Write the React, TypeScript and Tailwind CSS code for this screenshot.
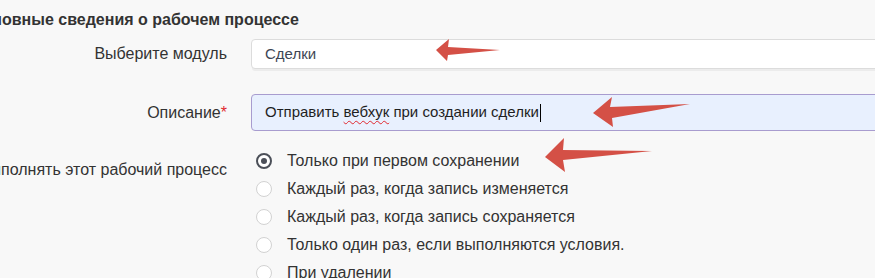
import React from "react";

const options = [
  "Только при первом сохранении",
  "Каждый раз, когда запись изменяется",
  "Каждый раз, когда запись сохраняется",
  "Только один раз, если выполняются условия.",
  "При удалении",
];

const Radio = ({ checked, label }: { checked?: boolean; label: string }) => (
  <label className="flex h-[28px] items-center">
    {checked ? (
      <span className="flex h-[16px] w-[16px] items-center justify-center rounded-full border-2 border-[#4b4f58] bg-white">
        <span className="h-[6px] w-[6px] rounded-full bg-[#4b4f58]" />
      </span>
    ) : (
      <span className="h-[16px] w-[16px] rounded-full border-[1.5px] border-[#d2d2d2] bg-white" />
    )}
    <span className="ml-[15px] whitespace-nowrap">{label}</span>
  </label>
);

// red arrows drawn over the form
const Arrows = () => (
  <svg
    className="pointer-events-none absolute left-0 top-0"
    width="875"
    height="278"
    viewBox="0 0 875 278"
  >
    <g fill="#d45046">
      <polygon points="436,50 449,39 448,47 500,50 448,55 447,61" />
      <polygon points="593,113 612,97 610,107 690,104 612,118 613,127" />
      <polygon points="545,157 564,138 563,150 652,151 563,160 565,172" />
    </g>
  </svg>
);

export default function App() {
  return (
    <div className="relative h-[278px] w-[875px] overflow-hidden bg-[#f8f8f8] font-['Liberation_Sans',Arial,sans-serif] text-[16px] text-[#333]">
      <h3 className="ml-[-29px] mt-[10px] whitespace-nowrap text-[16px] font-bold leading-[20px] text-[#333]">
        Основные сведения о рабочем процессе
      </h3>

      {/* module */}
      <div className="mt-[9px] flex items-center">
        <div className="flex w-[227px] shrink-0 justify-end whitespace-nowrap">
          Выберите модуль
        </div>
        <div className="ml-[24px] mr-[-20px] flex h-[30px] flex-1 items-center rounded-[4px] border border-[#dcdcdc] bg-white pl-[13px] text-[15px] text-[#3d4654] shadow-[0_3px_0_-1px_#ececec]">
          <span>Сделки</span>
        </div>
      </div>

      {/* description */}
      <div className="mt-[25px] flex items-center">
        <div className="flex w-[227px] shrink-0 justify-end whitespace-nowrap">
          Описание<span className="text-[#e0282f]">*</span>
        </div>
        <div className="ml-[24px] mr-[-20px] flex h-[37px] flex-1 items-center rounded-[4px] border border-[#a89ccf] bg-[#e8f0fe] pl-[13px] text-[15px] text-[#1f1f1f]">
          <span className="whitespace-nowrap">
            Отправить{" "}
            <span className="underline decoration-wavy decoration-[#e0282f] decoration-1 underline-offset-[3px]">
              вебхук
            </span>{" "}
            при создании сделки
          </span>
          <span className="ml-px h-[18px] w-px bg-black" />
        </div>
      </div>

      {/* execute */}
      <div className="mt-[16px] flex items-start">
        <div className="flex w-[227px] shrink-0 justify-end whitespace-nowrap pt-[13px] leading-[20px]">
          Выполнять этот рабочий процесс
        </div>
        <div className="ml-[29px] flex flex-col">
          {options.map((o, i) => (
            <Radio key={o} label={o} checked={i === 0} />
          ))}
        </div>
      </div>

      <Arrows />
    </div>
  );
}
